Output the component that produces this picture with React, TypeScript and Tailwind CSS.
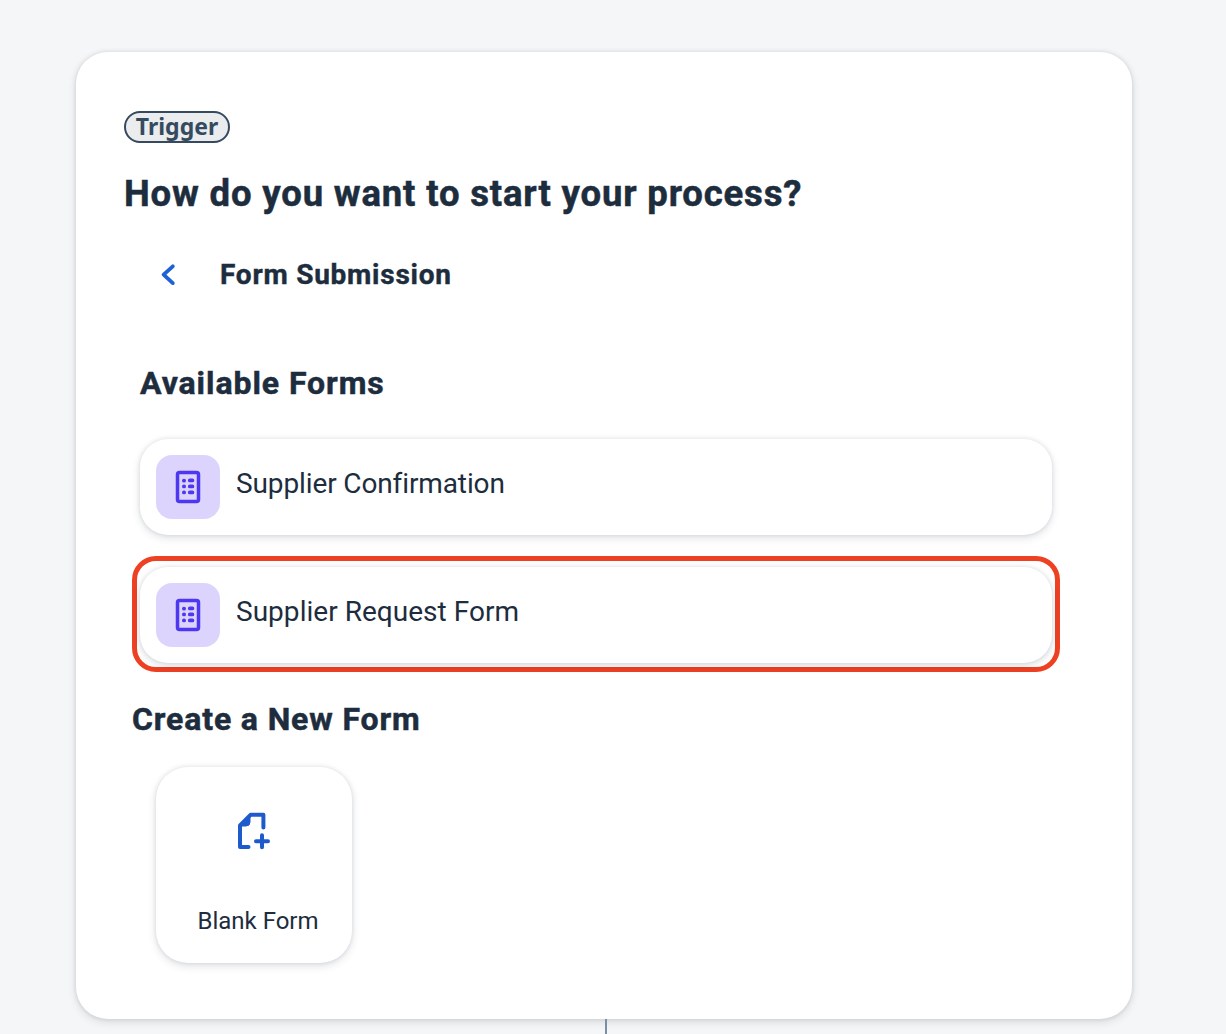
import React from "react";

function FormIcon() {
  return (
    <svg className="size-16 shrink-0" viewBox="0 0 64 64" fill="none">
      <rect width="64" height="64" rx="16" fill="#dcd4fc" />
      <rect x="21.5" y="17.5" width="21" height="29" rx="2" stroke="#4d37f0" strokeWidth="3.5" />
      <g stroke="#4d37f0" strokeWidth="3.8" strokeLinecap="round">
        <path d="M27.9 25.7h.2M27.9 31.4h.2M27.9 37.4h.2M33.8 25.4h2.6M33.8 31.4h2.6M33.8 37.4h2.6" />
      </g>
    </svg>
  );
}

function FormRow({ name, textClass }: { name: string; textClass: string }) {
  return (
    <div className="flex h-24 w-[912px] items-center rounded-[28px] bg-white pl-4 shadow-[0_0_4px_rgba(34,53,72,0.12),0_3px_8px_rgba(34,53,72,0.14)]">
      <FormIcon />
      <span className={`ml-4 -mt-[6px] whitespace-nowrap text-[28px] leading-8 ${textClass}`}>{name}</span>
    </div>
  );
}

export default function App() {
  return (
    <div className="flex h-[1034px] w-[1226px] flex-col overflow-hidden bg-[#f5f6f7] pt-[52px] pl-[76px] font-['Roboto',sans-serif] text-[#1d2d3e]">
      <main className="flex h-[967px] w-[1056px] shrink-0 flex-col items-start rounded-[32px] bg-white pt-[59px] pl-12 shadow-[0_0_4px_rgba(34,53,72,0.12),0_3px_8px_rgba(34,53,72,0.14)]">
        <span className="flex h-8 w-[106px] items-center justify-center rounded-full border-2 border-[#354a5f] bg-[#eaecee] pb-[2px] font-['Noto_Sans',sans-serif] text-[23px] leading-none font-bold text-[#354a5f]">
          Trigger
        </span>
        <h1 className="mt-[29px] whitespace-nowrap text-[36.5px] leading-[44px] font-bold tracking-[0.83px] [-webkit-text-stroke:0.5px_#1d2d3e]">
          How do you want to start your process?
        </h1>
        <div className="mt-[38px] flex h-10 items-center">
          <svg className="ml-8 h-6 w-6" viewBox="0 0 24 24" fill="none" stroke="#1f62d3" strokeWidth="3.8" strokeLinecap="round" strokeLinejoin="round">
            <path d="M16.800 4.300 7.600 12.700l9.200 8.400" />
          </svg>
          <h2 className="mt-[2px] ml-10 whitespace-nowrap text-[28px] leading-9 font-bold tracking-[0.76px] [-webkit-text-stroke:0.4px_#1d2d3e]">Form Submission</h2>
        </div>
        <h2 className="mt-[69px] ml-4 whitespace-nowrap text-[32px] leading-10 font-bold tracking-[0.93px] [-webkit-text-stroke:0.5px_#1d2d3e]">Available Forms</h2>
        <div className="mt-9 ml-4">
          <FormRow name="Supplier Confirmation" textClass="tracking-[-0.12px]" />
        </div>
        <div className="mt-[21px] ml-2 flex h-[116px] w-[928px] items-center rounded-[24px] border-[5px] border-[#ee4023] pt-[2px] pl-[3px]">
          <FormRow name="Supplier Request Form" textClass="tracking-[0.03px]" />
        </div>
        <h2 className="mt-[27px] ml-2 whitespace-nowrap text-[32px] leading-10 font-bold tracking-[0.86px] [-webkit-text-stroke:0.5px_#1d2d3e]">Create a New Form</h2>
        <div className="mt-7 ml-8 flex size-[196px] flex-col items-center rounded-[32px] bg-white pt-10 shadow-[0_0_4px_rgba(34,53,72,0.12),0_3px_8px_rgba(34,53,72,0.14)]">
          <svg className="size-12" viewBox="0 0 48 48" fill="none" stroke="#1d5bcd" strokeWidth="4" strokeLinecap="round" strokeLinejoin="round">
            <path d="M33.400 20.500V7.800H20.500L10 18.500V40h8.500" />
            <path d="M20 8v7a4 4 0 0 1-4 4H10Z" fill="#1d5bcd" stroke="#1d5bcd" strokeWidth="1" />
            <path d="M32 28.200v12M26 34.200h12" />
          </svg>
          <span className="ml-2 mt-[50px] whitespace-nowrap text-[24px] leading-8">Blank Form</span>
        </div>
      </main>
      <div className="ml-[529px] h-[15px] w-[2px] shrink-0 bg-[#788fa6]" />
    </div>
  );
}
